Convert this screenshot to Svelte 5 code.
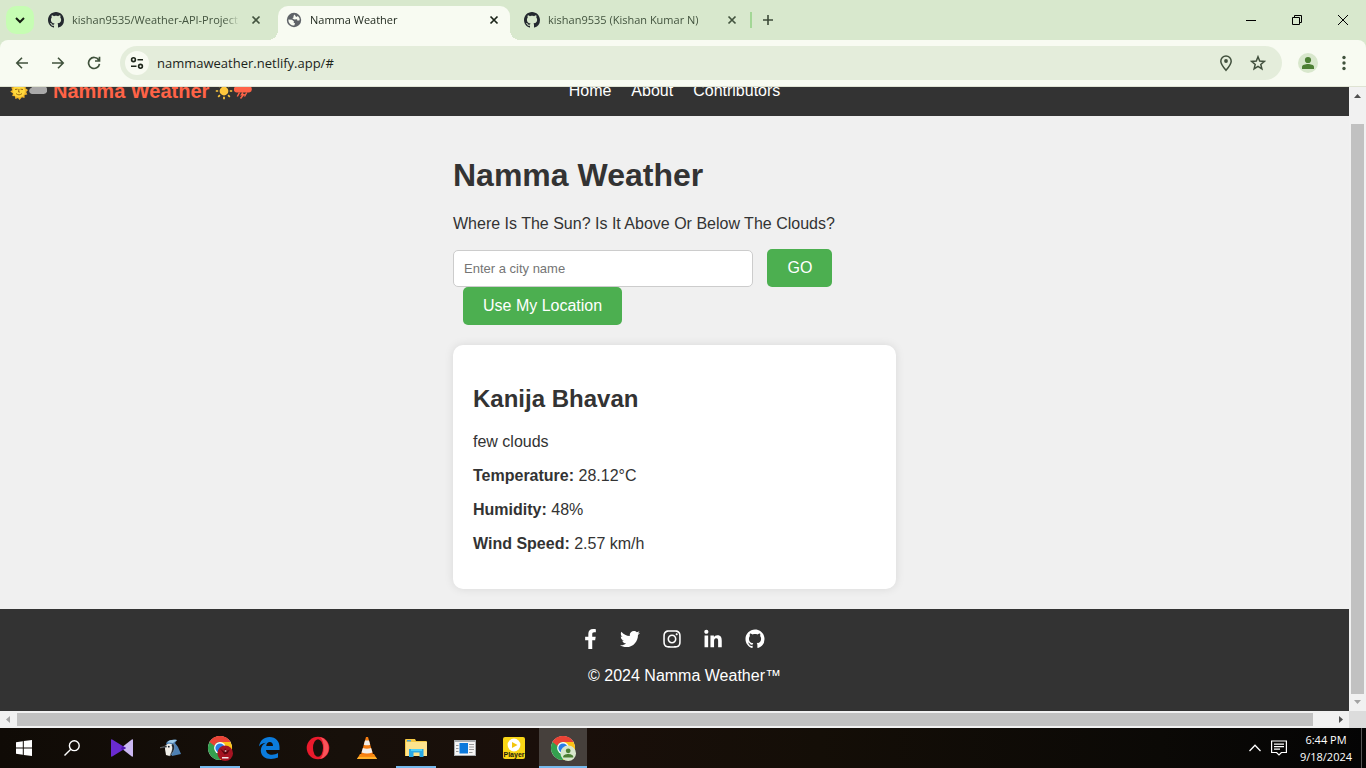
<script>
  const octocat = 'M8 0C3.58 0 0 3.58 0 8c0 3.54 2.29 6.53 5.47 7.59.4.07.55-.17.55-.38 0-.19-.01-.82-.01-1.49-2.01.37-2.53-.49-2.69-.94-.09-.23-.48-.94-.82-1.13-.28-.15-.68-.52-.01-.53.63-.01 1.08.58 1.23.82.72 1.21 1.87.87 2.33.66.07-.52.28-.87.51-1.07-1.78-.2-3.64-.89-3.64-3.95 0-.87.31-1.59.82-2.15-.08-.2-.36-1.02.08-2.12 0 0 .67-.21 2.2.82.64-.18 1.32-.27 2-.27s1.36.09 2 .27c1.53-1.04 2.2-.82 2.2-.82.44 1.1.16 1.92.08 2.12.51.56.82 1.27.82 2.15 0 3.07-1.87 3.75-3.65 3.95.29.25.54.73.54 1.48 0 1.07-.01 1.93-.01 2.2 0 .21.15.46.55.38A8.01 8.01 0 0 0 16 8c0-4.42-3.58-8-8-8z';

  const tabs = [
    { title: 'kishan9535/Weather-API-Project', icon: 'github', active: false },
    { title: 'Namma Weather', icon: 'globe', active: true },
    { title: 'kishan9535 (Kishan Kumar N)', icon: 'github', active: false }
  ];

  const links = ['Home', 'About', 'Contributors'];

  const readings = [
    { label: 'Temperature:', value: '28.12°C' },
    { label: 'Humidity:', value: '48%' },
    { label: 'Wind Speed:', value: '2.57 km/h' }
  ];

  const socials = [
    { name: 'Facebook', width: 13, box: '0 0 320 512', d: 'M279.14 288l14.22-92.66h-88.91v-60.13c0-25.35 12.42-50.06 52.24-50.06h40.42V6.26S260.43 0 225.36 0c-73.22 0-121.08 44.38-121.08 124.72v70.62H22.89V288h81.39v224h100.17V288z' },
    { name: 'Twitter', width: 20, box: '0 0 512 512', d: 'M459.37 151.716c.325 4.548.325 9.097.325 13.645 0 138.72-105.583 298.558-298.558 298.558-59.452 0-114.68-17.219-161.137-47.106 8.447.974 16.568 1.299 25.34 1.299 49.055 0 94.213-16.568 130.274-44.832-46.132-.975-84.792-31.188-98.112-72.772 6.498.974 12.995 1.624 19.818 1.624 9.421 0 18.843-1.3 27.614-3.573-48.081-9.747-84.143-51.98-84.143-102.985v-1.299c13.969 7.797 30.214 12.67 47.431 13.319-28.264-18.843-46.781-51.005-46.781-87.391 0-19.492 5.197-37.36 14.294-52.954 51.655 63.675 129.3 105.258 216.365 109.807-1.624-7.797-2.599-15.918-2.599-24.04 0-57.828 46.782-104.934 104.934-104.934 30.213 0 57.502 12.67 76.67 33.137 23.715-4.548 46.456-13.32 66.599-25.34-7.798 24.366-24.366 44.833-46.132 57.827 21.117-2.273 41.584-8.122 60.426-16.243-14.292 20.791-32.161 39.308-52.628 54.253z' },
    { name: 'Instagram', width: 18, box: '0 0 448 512', d: 'M224.1 141c-63.6 0-114.9 51.3-114.9 114.9s51.3 114.9 114.9 114.9S339 319.5 339 255.9 287.7 141 224.1 141zm0 189.6c-41.1 0-74.7-33.5-74.7-74.7s33.5-74.7 74.7-74.7 74.7 33.5 74.7 74.7-33.6 74.7-74.7 74.7zm146.4-194.3c0 14.9-12 26.8-26.8 26.8-14.9 0-26.8-12-26.8-26.8s12-26.8 26.8-26.8 26.8 12 26.8 26.8zm76.1 27.2c-1.7-35.9-9.9-67.7-36.2-93.9-26.2-26.2-58-34.4-93.9-36.2-37-2.1-147.9-2.1-184.9 0-35.8 1.7-67.6 9.9-93.9 36.1s-34.4 58-36.2 93.9c-2.1 37-2.1 147.9 0 184.9 1.7 35.9 9.9 67.7 36.2 93.9s58 34.4 93.9 36.2c37 2.1 147.9 2.1 184.9 0 35.9-1.7 67.7-9.9 93.9-36.2 26.2-26.2 34.4-58 36.2-93.9 2.1-37 2.1-147.8 0-184.8zM398.8 388c-7.8 19.6-22.9 34.7-42.6 42.6-29.5 11.7-99.5 9-132.1 9s-102.7 2.6-132.1-9c-19.6-7.8-34.7-22.9-42.6-42.6-11.7-29.5-9-99.5-9-132.1s-2.6-102.7 9-132.1c7.8-19.6 22.9-34.7 42.6-42.6 29.5-11.7 99.5-9 132.1-9s102.7-2.6 132.1 9c19.6 7.8 34.7 22.9 42.6 42.6 11.7 29.5 9 99.5 9 132.1s2.7 102.7-9 132.1z' },
    { name: 'LinkedIn', width: 18, box: '0 -16 448 512', d: 'M100.28 448H7.4V148.9h92.88zM53.79 108.1C24.09 108.1 0 83.5 0 53.8a53.79 53.79 0 0 1 107.58 0c0 29.7-24.1 54.3-53.79 54.3zM447.9 448h-92.68V302.4c0-34.7-.7-79.2-48.29-79.2-48.29 0-55.69 37.7-55.69 76.7V448h-92.78V148.9h89.08v40.8h1.3c12.4-23.5 42.69-48.3 87.88-48.3 94 0 111.28 61.9 111.28 142.3V448z' },
    { name: 'GitHub', width: 20, box: '-0.4 -0.4 16.8 16.8', d: octocat }
  ];

  let city = $state('');
</script>

{#snippet chromeBall()}
  <circle cx="12" cy="12" r="12" fill="#fff" />
  <path d="M12 12 1.6 6A12 12 0 0 1 22.4 6z" fill="#ea4335" />
  <path d="M12 12 1.6 6A12 12 0 0 0 12 24L17.2 15z" fill="#34a04f" />
  <path d="M12 12 12 24A12 12 0 0 0 22.4 6H12z" fill="#fbc116" />
  <path d="M1.6 6 6.8 15 12 12V6z" fill="#34a04f" />
  <path d="M1.6 6A12 12 0 0 1 22.4 6H12A6 6 0 0 0 6.500 10z" fill="#ea4335" />
  <circle cx="12" cy="12" r="5.900" fill="#fff" />
  <circle cx="12" cy="12" r="4.600" fill="#2a7de8" />
{/snippet}

<div class="desktop">
  <header class="tabstrip">
    <button class="tabsearch" aria-label="Search tabs">
      <svg width="10" height="10" viewBox="0 0 10 10" fill="none" stroke="#151f12" stroke-width="2"><path d="M1 3l4 4 4-4" /></svg>
    </button>
    <div class="tabs">
      {#each tabs as tab}
        <div class="tab" class:active={tab.active}>
          {#if tab.icon === 'github'}
            <svg width="16" height="16" viewBox="0 0 16 16" fill="#24292f"><path d={octocat} /></svg>
          {:else}
            <svg width="16" height="16" viewBox="0 0 16 16"><circle cx="8" cy="8" r="7.200" fill="#5f6368" /><path d="M2.300 7.600 6 7.800 8 9.600 7.600 10.700 9 11.200 8.300 13.600A5.700 5.700 0 0 1 2.300 7.600zM8.700 2.400 7.400 3.900 7.700 5.200 6.300 6.300 8.200 7.500 11 7.200 11.500 8.800 13.700 8.300A5.700 5.700 0 0 0 11.700 3.700L11 5 9.700 4.600z" fill="#f8fbf2" /></svg>
          {/if}
          <span class="title">{tab.title}</span>
          <button class="close" aria-label="Close tab">
            <svg width="10" height="10" viewBox="0 0 10 10" stroke="currentColor" stroke-width="1.700"><path d="M1.500 1.500l7 7M8.500 1.500l-7 7" /></svg>
          </button>
        </div>
      {/each}
      <span class="divider"></span>
      <button class="newtab" aria-label="New tab">
        <svg width="12" height="12" viewBox="0 0 12 12" stroke="#3c4a38" stroke-width="1.600"><path d="M6 1v10M1 6h10" /></svg>
      </button>
    </div>
    <div class="winctl">
      <button aria-label="Minimize"><svg width="10" height="10" viewBox="0 0 10 10"><path d="M0 5h10v1H0z" /></svg></button>
      <button aria-label="Restore"><svg width="10" height="10" viewBox="0 0 10 10" fill="none" stroke="#000"><path d="M.5 2.500h7v7h-7zM2.500 2.500v-2h7v7h-2" /></svg></button>
      <button aria-label="Close"><svg width="10" height="10" viewBox="0 0 10 10" stroke="#000"><path d="M0 0l10 10M10 0 0 10" /></svg></button>
    </div>
  </header>

  <div class="toolbarback">
    <div class="toolbar">
      <button class="nav" aria-label="Back"><svg width="14" height="14" viewBox="0 0 14 14" fill="none" stroke="#40523c" stroke-width="1.600"><path d="M13 7H2M7 1.800 1.800 7 7 12.200" /></svg></button>
      <button class="nav" aria-label="Forward"><svg width="14" height="14" viewBox="0 0 14 14" fill="none" stroke="#40523c" stroke-width="1.600"><path d="M1 7h11M7 1.800 12.200 7 7 12.200" /></svg></button>
      <button class="nav" aria-label="Reload"><svg width="14" height="14" viewBox="0 0 14 14" fill="none" stroke="#40523c" stroke-width="1.700"><path d="M11.700 4A5.500 5.500 0 1 0 12.500 7.800M12.500.8V5H8" /></svg></button>
      <div class="omnibox">
        <button class="siteinfo" aria-label="View site information">
          <svg width="14" height="14" viewBox="0 0 14 14" fill="none" stroke="#1d261a" stroke-width="1.600"><circle cx="3.500" cy="3.700" r="1.900" /><path d="M7.500 3.700H13M1 10.300h5.500" /><circle cx="10.500" cy="10.300" r="1.900" /></svg>
        </button>
        <input class="url" type="text" aria-label="Address and search bar" value="nammaweather.netlify.app/#" />
        <button class="act" aria-label="Location access"><svg width="16" height="18" viewBox="0 0 16 18" fill="none" stroke="#41503d" stroke-width="1.500"><path d="M8 16.300C5 12.800 2.800 10 2.800 7.200a5.200 5.200 0 0 1 10.400 0C13.200 10 11 12.800 8 16.300z" /><circle cx="8" cy="7" r="1.900" fill="#41503d" stroke="none" /></svg></button>
        <button class="act" aria-label="Bookmark this tab"><svg width="16" height="16" viewBox="0 0 16 16" fill="none" stroke="#41503d" stroke-width="1.500" stroke-linejoin="miter"><path d="M8 1.800l1.700 4.300 4.600.3-3.500 3 1.100 4.500L8 11.400l-3.900 2.500 1.100-4.500-3.500-3 4.600-.3z" /></svg></button>
      </div>
      <button class="avatar" aria-label="Profile"><svg width="20" height="20" viewBox="0 0 20 20"><circle cx="10" cy="10" r="10" fill="#d8e7cc" /><circle cx="10" cy="7" r="3.100" fill="#4d7f34" /><path d="M4 16v-2c0-2 3.500-2.900 6-2.900s6 .9 6 2.900v2z" fill="#4d7f34" /></svg></button>
      <button class="menu" aria-label="Menu"><svg width="4" height="16" viewBox="0 0 4 16" fill="#40523c"><circle cx="2" cy="2.500" r="1.700" /><circle cx="2" cy="8" r="1.700" /><circle cx="2" cy="13.500" r="1.700" /></svg></button>
    </div>
  </div>

  <div class="viewport">
    <div class="page">
      <nav class="navbar">
        <a class="brand" href="#top">
          <svg width="18" height="18" viewBox="0 0 18 18"><path d="M9 0l1.500 2.200L13 .9l.4 2.700 2.800.1-.7 2.600L18 8l-1.800 2 1.100 2.500-2.700.6-.1 2.800-2.600-.7L9.500 18 8 15.900l-2.600 1-.5-2.700-2.700-.2.8-2.600L.3 9.500 2.400 8 1.200 5.400l2.700-.5L4.200 2.200l2.600.6z" fill="#f5b92a" /><circle cx="9" cy="9" r="6" fill="#ffd83d" /><path d="M5 7.500l2.500-.3M10.500 7.200l2.500.3M9 7l-.5 3h1.500M6 11.500c1.500 1.800 4.500 1.800 6 0" fill="none" stroke="#9c6b12" /></svg>
          <svg width="18" height="18" viewBox="0 0 18 18"><path d="M3.200 12a3.200 3.200 0 0 1-.6-6.300A6 6 0 0 1 13.500 4 4 4 0 0 1 14.800 12z" fill="#a9a9a9" /></svg>
          <span>Namma Weather</span>
          <svg width="18" height="18" viewBox="0 0 18 18"><circle cx="9" cy="9" r="4.400" fill="#ffc83d" /><path d="M9 .8v2.400M9 14.800v2.400M.8 9h2.400M14.800 9h2.400M3.200 3.200l1.700 1.700M13.100 13.100l1.700 1.700M3.200 14.800l1.700-1.700M13.100 4.900l1.700-1.700" stroke="#ffc83d" stroke-width="1.700" /></svg>
          <svg width="18" height="18" viewBox="0 0 18 18"><path d="M3 10.500a3 3 0 0 1-.4-6A5 5 0 0 1 13 3.500a3.600 3.600 0 0 1 2.200 7z" fill="#ff6347" /><path d="M5.500 10.500l-2.200 4M9 10.500l-1.500 2.300H9.500L6.500 16.500M12.800 10.500l-2.300 4" stroke="#ff6347" stroke-width="1.500" fill="none" /></svg>
        </a>
        <ul>
          {#each links as link}
            <li><a href="#{link.toLowerCase()}">{link}</a></li>
          {/each}
        </ul>
      </nav>

      <main>
        <h1>Namma Weather</h1>
        <p class="lead">Where Is The Sun? Is It Above Or Below The Clouds?</p>
        <form onsubmit={(e) => e.preventDefault()}>
          <input class="city" type="text" aria-label="City name" placeholder="Enter a city name" bind:value={city} />
          <button class="go" type="submit">GO</button>
          <button class="go" type="button">Use My Location</button>
        </form>
        <section class="card">
          <h2>Kanija Bhavan</h2>
          <p>few clouds</p>
          {#each readings as r}
            <p><strong>{r.label}</strong> {r.value}</p>
          {/each}
        </section>
      </main>

      <footer>
        <div class="socials">
          {#each socials as s}
            <a href="#{s.name.toLowerCase()}" aria-label={s.name}><svg width={s.width} height="20" viewBox={s.box} fill="#fff"><path d={s.d} /></svg></a>
          {/each}
        </div>
        <p class="copyright">© 2024 Namma Weather™</p>
      </footer>
    </div>

    <div class="vbar">
      <svg width="17" height="17" viewBox="0 0 17 17"><path d="M5 11h7L8.500 7z" fill="#505050" /></svg>
      <div class="thumb"></div>
      <svg width="17" height="17" viewBox="0 0 17 17"><path d="M5 6h7l-3.500 4z" fill="#a3a3a3" /></svg>
    </div>
    <div class="hbar">
      <svg width="17" height="17" viewBox="0 0 17 17"><path d="M10 5v7L6 8.500z" fill="#a3a3a3" /></svg>
      <div class="thumb"></div>
      <svg width="17" height="17" viewBox="0 0 17 17"><path d="M7 5v7l4-3.500z" fill="#505050" /></svg>
    </div>
    <div class="corner"></div>
  </div>

  <div class="taskbar">
    <div class="system">
      <button aria-label="Start"><svg width="16" height="16" viewBox="0 0 16 16" fill="#fff"><path d="M0 2.200 6.800 1.200v6.300H0zM7.800 1.100 16 0v7.500H7.800zM0 8.500h6.800v6.300L0 13.800zM7.800 8.500H16V16l-8.200-1.100z" /></svg></button>
      <button aria-label="Search"><svg width="16" height="16" viewBox="0 0 16 16" fill="none" stroke="#fff" stroke-width="1.400"><circle cx="10.300" cy="5.700" r="4.900" /><path d="M6.800 9.200.5 15.500" /></svg></button>
    </div>
    <div class="apps">
      <button aria-label="Visual editor"><svg width="22" height="18" viewBox="0 0 22 18"><path d="M22 1Q22 0 20.800.5L10 9l10.800 8.500Q22 18 22 17z" fill="#cbb8f3" /><path d="M0 1Q0 0 1.200.5L15 9 1.200 17.500Q0 18 0 17z" fill="#6a2bd0" /><path d="M11.500 7 15 9l-3.500 2.200L10 9.600z" fill="#4e17b0" /></svg></button>
      <button aria-label="Bluebird"><svg width="22" height="18" viewBox="0 0 22 18"><path d="M6 4C8 1 12 0 17 1L15 4l3 4 3 7-9 2z" fill="#4d80b3" /><path d="M7 3.300C9 1 13 .4 17 1l-4 3z" fill="#9ecbea" /><path d="M5.500 6.500C8 4 12 4.500 13.500 7 14 11 12 15 9.500 17L6 16 5 10z" fill="#f0eee8" /><path d="M0 8.800 6.500 6.500 7 8.200 3 8.600zM13 4.500c3 3.500.5 9.500-3.500 12.500 2.500-4.500 3.500-8 2-11z" fill="#151d26" stroke="#cfd6da" stroke-width=".3" /><circle cx="8.800" cy="7.700" r=".9" fill="#151d26" /></svg></button>
      <button class="open" aria-label="Chrome, first profile"><svg width="26" height="26" viewBox="-1 -1 26 26">{@render chromeBall()}<circle cx="17.200" cy="17.200" r="7.800" fill="#a51422" /><path d="M12 12.500l4 3 1-3.500 1.500 3 3.500-1.500-2.500 4-3 1-2-2.500z" fill="#5d0710" /><circle cx="17.500" cy="15" r="1" fill="#c9a3a3" /><path d="M14 21h6.500v1.500H14z" fill="#f5e7e7" /></svg></button>
      <button aria-label="Edge"><svg width="21" height="22" viewBox="0 0 21 22"><path d="M0 9.500C1 3.500 5 0 10.500 0 17 0 20.500 4.500 20.500 10v3H7c.2 3.200 2.700 4.700 6 4.700 2.300 0 4.300-.6 6-1.700v4.600C17 21.500 14.600 22 12 22 6 22 1.800 18.500 1.800 13.500c0-3.600 2-6.300 5-7.700C3.500 6.200 1.500 7.500 0 9.500zM7.200 9H14c0-2.600-1.200-4-3.300-4C8.900 5 7.500 6.600 7.200 9z" fill="#0b7bdc" /></svg></button>
      <button aria-label="Opera"><svg width="24" height="24" viewBox="0 0 24 24"><circle cx="12" cy="12" r="11.300" fill="#ea1a2c" /><path d="M14 1a11.300 11.300 0 0 1 0 22C19 19 19 5 14 1z" fill="#f9545a" /><ellipse cx="12" cy="12" rx="5" ry="8.800" fill="#18100b" /></svg></button>
      <button aria-label="VLC"><svg width="20" height="22" viewBox="0 0 20 22"><path d="M3 17h14l3 5H0z" fill="#f68a12" /><path d="M1.200 20h17.600l1.200 2H0z" fill="#ffb02b" /><path d="M9 0h2l5 17.500q-6 2.500-12 0z" fill="#f47c12" /><path d="M8 3.500h4l1.200 4.200q-3.200 1.200-6.400 0zM5.900 11q4.100 1.500 8.200 0l1.400 4.500q-5.500 2-11 0z" fill="#f1efec" /></svg></button>
      <button class="open" aria-label="File Explorer"><svg width="22" height="19" viewBox="0 0 22 19"><path d="M0 1Q0 0 1 0h9l1 2h10q1 0 1 1v14H0z" fill="#f5c945" /><path d="M1 3h21v14H1z" fill="#fde38d" /><path d="M2 1h4v1.500H2z" fill="#44a6db" /><path d="M4 10h14.500v8h-4v-4.500h-6V18H4z" fill="#29a9e6" /><path d="M6 10h11v2H6z" fill="#4ed1f7" /></svg></button>
      <button aria-label="Document viewer"><svg width="22" height="16" viewBox="0 0 22 16"><path d="M0 0h22v16H0z" fill="#a9adb0" /><path d="M1 2h20v13H1z" fill="#f5f5f5" /><path d="M5.500 3H14v10.500H5.500z" fill="#0a78dc" /><path d="M2 5.500h2.500M2 8.500h2.500M2 11.500h2.500M15 4.500h5M15 7h5M15 9.500h5M15 12.500h3.500" stroke="#9a9a9a" /></svg></button>
      <button aria-label="Player"><span class="player"><svg width="14" height="14" viewBox="0 0 14 14"><circle cx="7" cy="7" r="6.400" fill="#fff" /><path d="M5 4l5.500 3L5 10z" fill="#f3c60d" /></svg><b>Player</b></span></button>
      <button class="open current" aria-label="Chrome, second profile"><svg width="26" height="26" viewBox="-1 -1 26 26">{@render chromeBall()}<circle cx="17.200" cy="17.200" r="7.800" fill="#d8e7cc" /><circle cx="17.200" cy="14.800" r="2.400" fill="#4d7f34" /><path d="M12.200 21.500v-1c0-1.800 3-2.600 5-2.600s5 .8 5 2.600v1z" fill="#4d7f34" /></svg></button>
    </div>
    <div class="tray">
      <button aria-label="Show hidden icons"><svg width="12" height="8" viewBox="0 0 12 8" fill="none" stroke="#fff" stroke-width="1.300"><path d="M.5 7 6 1.300 11.500 7" /></svg></button>
      <button aria-label="Notifications"><svg width="16" height="16" viewBox="0 0 16 16" fill="none" stroke="#fff" stroke-width="1.200"><path d="M.6 1h14.800v11.500h-5L8 15l-2.400-2.500h-5zM3 4.200h10M3 6.700h10M3 9.200h6" /></svg></button>
      <div class="clock"><time>6:44 PM</time><time>9/18/2024</time></div>
      <span class="peek"></span>
    </div>
  </div>
</div>

<style>
  :global(body) {
    margin: 0;
  }

  .desktop {
    display: flex;
    flex-direction: column;
    height: 100vh;
    overflow: hidden;
    font-family: 'Open Sans', 'Noto Sans', sans-serif;
    font-size: 11px;
  }

  .desktop *,
  .desktop {
    box-sizing: border-box;
  }

  button {
    border: 0;
    padding: 0;
    background: none;
    font: inherit;
    color: inherit;
    display: flex;
    align-items: center;
    justify-content: center;
  }

  svg {
    display: block;
    flex: none;
  }

  /* Tab strip */
  .tabstrip {
    display: flex;
    height: 40px;
    background: #d8e8cd;
    color: #43543f;
  }

  .tabsearch {
    width: 28px;
    height: 28px;
    margin: 6px;
    border-radius: 10px;
    background: #c6fdb3;
  }

  .tabs {
    flex: 1;
    min-width: 0;
    display: flex;
    align-items: flex-end;
  }

  .tab {
    position: relative;
    display: flex;
    align-items: center;
    gap: 8px;
    width: 232px;
    height: 34px;
    margin-right: 6px;
    padding: 0 8px 6px;
  }

  .tab.active {
    background: #f8fbf2;
    border-radius: 10px 10px 0 0;
    color: #1b2419;
  }

  .tab.active::before,
  .tab.active::after {
    content: '';
    position: absolute;
    bottom: 0;
    width: 10px;
    height: 10px;
  }

  .tab.active::before {
    left: -10px;
    background: radial-gradient(circle at 0 0, #d8e8cd 10px, #f8fbf2 10px);
  }

  .tab.active::after {
    right: -10px;
    background: radial-gradient(circle at 100% 0, #d8e8cd 10px, #f8fbf2 10px);
  }

  .title {
    flex: 1;
    min-width: 0;
    overflow: hidden;
    white-space: nowrap;
    line-height: 16px;
    mask-image: linear-gradient(to right, #000 calc(100% - 16px), transparent);
  }

  .close {
    width: 16px;
    height: 16px;
  }

  .divider {
    width: 2px;
    height: 16px;
    margin: 0 0 12px -4px;
    background: #a3d796;
  }

  .newtab {
    width: 28px;
    height: 28px;
    margin: 0 0 6px 2px;
  }

  .winctl {
    display: flex;
  }

  .winctl button {
    width: 46px;
    height: 40px;
  }

  /* Toolbar */
  .toolbarback {
    background: #d8e8cd;
  }

  .toolbar {
    display: flex;
    align-items: center;
    height: 47px;
    padding: 0 8px 1px 4px;
    background: #f8fbf2;
    border-bottom: 1px solid #dfe3d3;
    border-radius: 8px 8px 0 0;
  }

  .nav {
    width: 36px;
    height: 34px;
  }

  .omnibox {
    flex: 1;
    min-width: 0;
    display: flex;
    align-items: center;
    height: 34px;
    margin: 0 12px 0 8px;
    padding: 0 8px 0 5px;
    border-radius: 17px;
    background: #e4eddb;
  }

  .siteinfo {
    width: 24px;
    height: 24px;
    border-radius: 12px;
    background: #f8fbf2;
  }

  .url {
    flex: 1;
    min-width: 0;
    padding: 0 8px;
    border: 0;
    outline: 0;
    background: none;
    font: 13px/20px 'Open Sans', 'Noto Sans', sans-serif;
    color: #1b2419;
  }

  .act {
    width: 32px;
    height: 32px;
  }

  .avatar {
    width: 28px;
    height: 28px;
  }

  .menu {
    width: 28px;
    height: 28px;
    margin-left: 8px;
  }

  /* Page viewport with its scroll bars */
  .viewport {
    flex: 1;
    min-height: 0;
    display: grid;
    grid-template: minmax(0, 1fr) 17px / minmax(0, 1fr) 17px;
  }

  .page {
    display: flex;
    flex-direction: column;
    justify-content: flex-end;
    overflow: hidden;
    background: #f0f0f0;
    color: #333;
    font: 16px/18px 'Liberation Sans', Arial, sans-serif;
  }

  .vbar,
  .hbar {
    display: flex;
    background: #f1f1f1;
  }

  .vbar {
    flex-direction: column;
  }

  .thumb {
    flex: 1;
    background: #c1c1c1;
  }

  .vbar .thumb {
    margin: 20px 2px 0;
  }

  .hbar .thumb {
    margin: 2px 19px 2px 0;
  }

  .corner {
    background: #dcdcdc;
  }

  .navbar {
    flex: none;
    display: grid;
    grid-template-columns: 1fr auto 1fr;
    align-items: center;
    padding: 14px 10px;
    background: #333;
  }

  .brand {
    display: flex;
    align-items: center;
    gap: 1px;
    color: #ff6347;
    font-size: 20px;
    line-height: 22px;
    font-weight: bold;
    text-decoration: none;
  }

  .brand span {
    margin: 0 5px;
  }

  .navbar ul {
    display: flex;
    gap: 20px;
    margin: 0;
    padding: 0;
    list-style: none;
  }

  .navbar li a {
    color: #fff;
    text-decoration: none;
  }

  main {
    flex: none;
    width: 443px;
    max-width: 100%;
    margin: 0 auto;
    padding: 20px 0;
  }

  h1 {
    margin: 21px 0;
    font-size: 32px;
    line-height: 37px;
  }

  .page p {
    margin: 16px 0;
  }

  .city {
    width: 300px;
    height: 37px;
    padding: 10px;
    border: 1px solid #ccc;
    border-radius: 5px;
    background: #fff;
    font: 13px/15px 'Liberation Sans', Arial, sans-serif;
  }

  .city::placeholder {
    color: #757575;
  }

  .go {
    display: inline-block;
    margin-left: 10px;
    padding: 10px 20px;
    border-radius: 5px;
    background: #4caf50;
    color: #fff;
    line-height: 18px;
  }

  .card {
    margin-top: 20px;
    padding: 20px;
    border-radius: 10px;
    background: #fff;
    box-shadow: 0 0 10px rgba(0, 0, 0, 0.1);
  }

  h2 {
    margin: 20px 0;
    font-size: 24px;
    line-height: 28px;
  }

  footer {
    flex: none;
    padding: 20px 20px 10px;
    background: #333;
    color: #fff;
    text-align: center;
  }

  .socials {
    display: flex;
    justify-content: center;
    gap: 23px;
    padding-bottom: 2px;
  }

  .copyright {
    padding-left: 20px;
  }

  /* Taskbar */
  .taskbar {
    display: flex;
    height: 40px;
    background: linear-gradient(to right, #100b06, #17100a 25%, #1a0f0a 40%, #140e07 60%, #0b0906 85%, #040404);
    color: #fff;
  }

  .system {
    display: flex;
    margin-right: 2px;
  }

  .system button,
  .apps button {
    position: relative;
    width: 48px;
    height: 40px;
  }

  .apps {
    flex: 1;
    display: flex;
    gap: 1px;
  }

  .open::after {
    content: '';
    position: absolute;
    left: 4px;
    right: 4px;
    bottom: 0;
    height: 2px;
    background: #76b9ed;
  }

  .apps .current {
    background: #46403c;
  }

  .current::after {
    left: 0;
    right: 0;
  }

  .player {
    display: flex;
    flex-direction: column;
    align-items: center;
    width: 22px;
    height: 22px;
    padding-top: 1px;
    border-radius: 2px;
    background: #f9d616;
    color: #1c1a10;
    font: 7px/6px 'Liberation Sans', Arial, sans-serif;
  }

  .tray {
    display: flex;
    align-items: center;
  }

  .tray button {
    width: 24px;
    height: 40px;
  }

  .clock {
    display: flex;
    flex-direction: column;
    align-items: center;
    width: 70px;
    line-height: 17px;
  }

  .peek {
    width: 5px;
    height: 40px;
    border-left: 1px solid #555;
  }
</style>
